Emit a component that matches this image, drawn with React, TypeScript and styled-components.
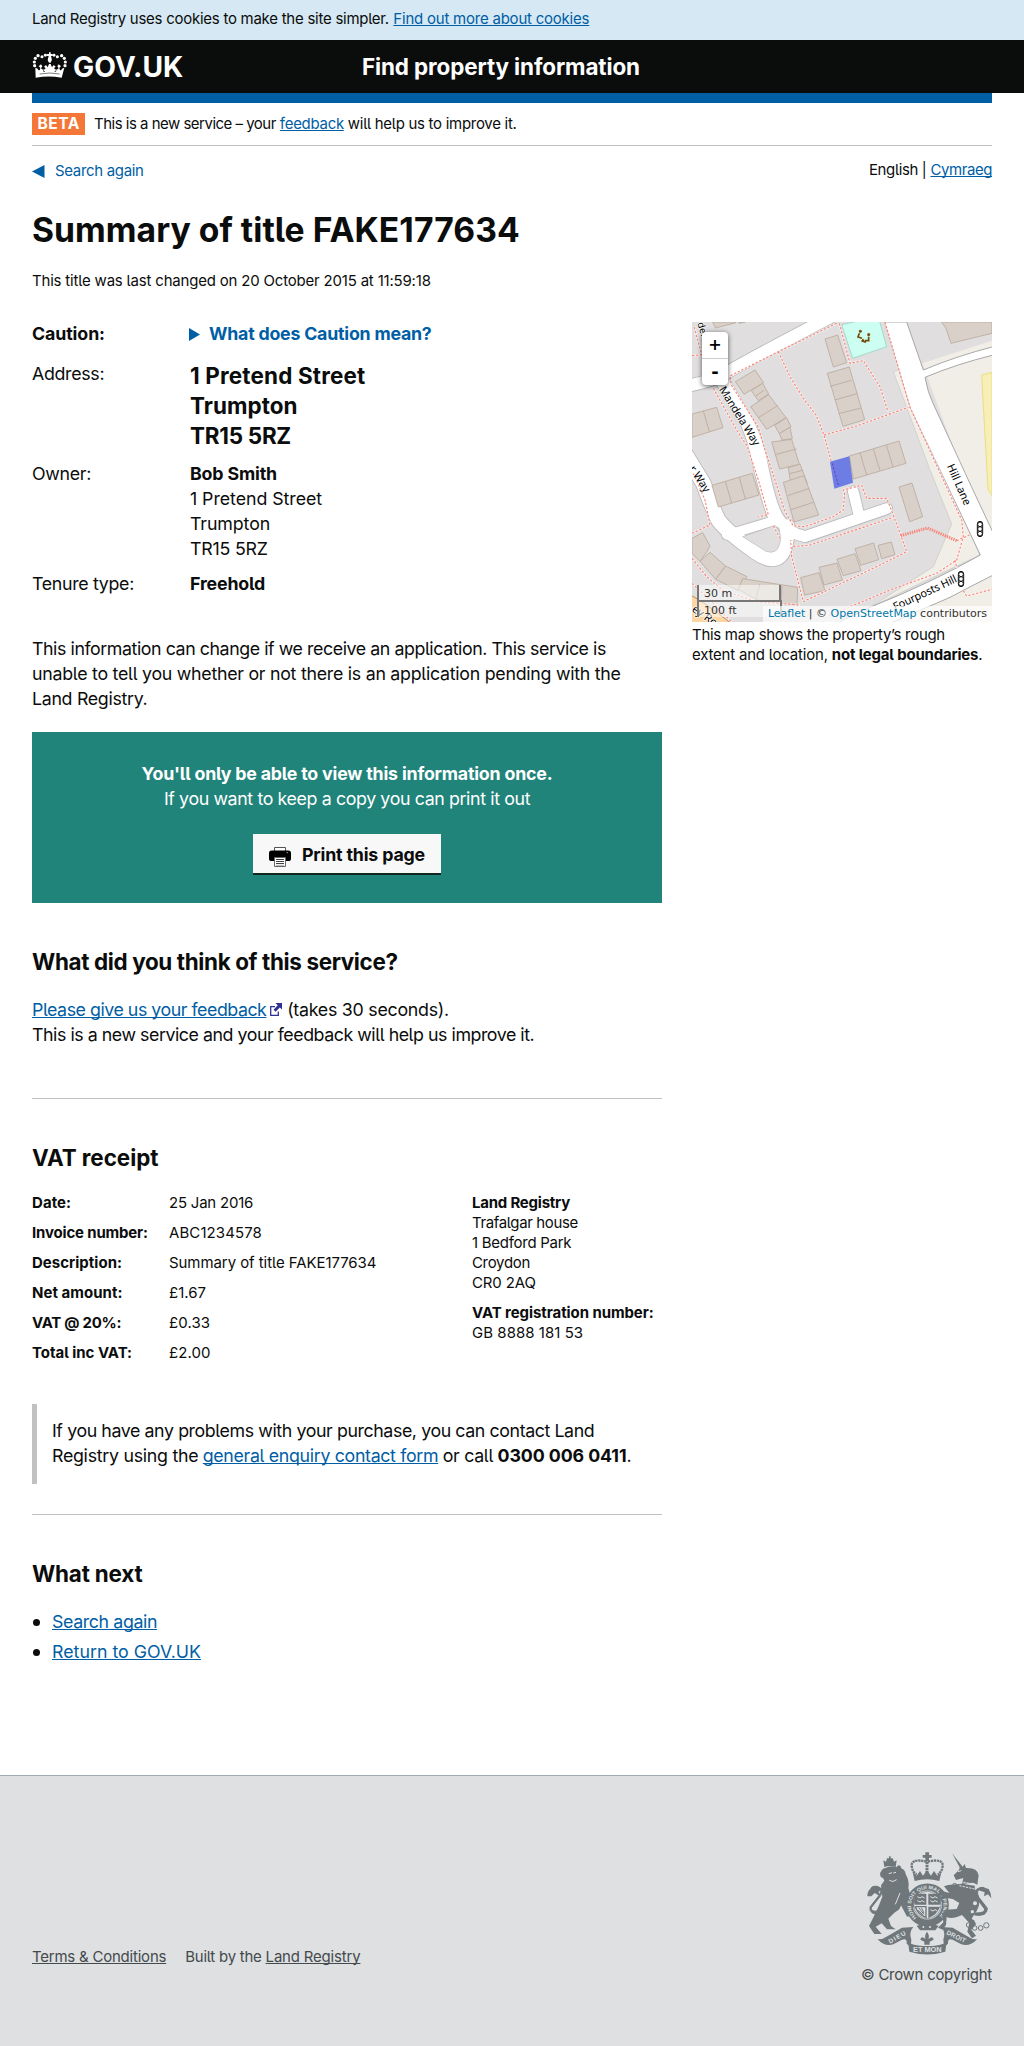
import React from 'react';
import styled, { createGlobalStyle, css } from 'styled-components';

const ink = '#0b0c0c';
const blue = '#005ea5';
const rule = '#bfc1c3';

const Global = createGlobalStyle`
  body {
    margin: 0;
    background: #fff;
    color: ${ink};
    font-family: Inter, "Noto Sans", sans-serif;
    font-feature-settings: "cv05" 1;
    font-size: 14.96px;
    line-height: 20px;
    white-space: nowrap;
  }
`;

/* Type scale */
const T = styled.span<{ $ls?: number }>`
  letter-spacing: ${(p) => p.$ls ?? 0}px;
`;
const B = styled(T)`
  font-weight: 700;
`;
const A = styled.a<{ $ls?: number; $plain?: boolean }>`
  color: ${blue};
  letter-spacing: ${(p) => p.$ls ?? 0}px;
  text-decoration: ${(p) => (p.$plain ? 'none' : 'underline')};
  text-decoration-thickness: 1px;
  text-decoration-skip-ink: none;
  text-underline-offset: 1px;
`;
const body19 = css`
  font-size: 17.77px;
  line-height: 25px;
`;
const Para = styled.p`
  ${body19}
  margin: 0;
`;
const H1 = styled.h1<{ $ls?: number }>`
  font-size: 33.66px;
  line-height: 40px;
  margin: 0;
  letter-spacing: ${(p) => p.$ls ?? 0}px;
`;
const H2 = styled.h2<{ $ls?: number }>`
  font-size: 22.44px;
  line-height: 30px;
  margin: 0;
  letter-spacing: ${(p) => p.$ls ?? 0}px;
`;
const Rule = styled.hr`
  border: 0;
  height: 1px;
  margin: 0;
  background: ${rule};
`;

/* Page chrome */
const Wrap = styled.div`
  width: 960px;
  margin: 0 auto;
`;
const CookieBar = styled.div`
  height: 31px;
  padding-top: 9px;
  background: #d5e8f3;
`;
const Words = styled.div<{ $gap?: number; $drop?: number }>`
  display: flex;
  align-items: baseline;
  gap: ${(p) => p.$gap ?? 4.5}px;
  padding-top: ${(p) => p.$drop ?? 0}px;
`;
const Masthead = styled.header`
  height: 53px;
  background: ${ink};
  color: #fff;
`;
const MastheadRow = styled(Wrap)`
  display: flex;
  height: 53px;
`;
const Logo = styled.a`
  display: flex;
  width: 330px;
  gap: 5px;
  padding-top: 12px;
  box-sizing: border-box;
  font-size: 28.2px;
  line-height: 30px;
  font-weight: 700;
`;
const ServiceName = styled.div`
  padding-top: 12px;
  font-size: 22.44px;
  line-height: 30px;
  font-weight: 700;
  letter-spacing: -0.12px;
`;
const BlueBar = styled.div`
  height: 10px;
  background: ${blue};
`;
const Phase = styled.div`
  display: flex;
  gap: 9px;
  height: 22px;
  padding: 10px 0;
  border-bottom: 1px solid ${rule};
`;
const Tag = styled.strong`
  width: 53px;
  height: 22px;
  padding-left: 5.5px;
  box-sizing: border-box;
  background: #f47738;
  color: #fff;
  font-size: 15.6px;
  line-height: 21px;
  letter-spacing: 0.5px;
`;
const Topline = styled.div`
  display: flex;
  justify-content: space-between;
  height: 50px;
  padding-top: 14px;
`;
const Back = styled.div`
  display: flex;
  align-items: center;
  height: 20px;
  gap: 10px;
  padding-top: 1px;
`;
const Columns = styled.div`
  display: flex;
  justify-content: space-between;
`;
const Main = styled.main`
  width: 630px;
  padding-top: 30px;
  height: 1454px;
`;
const Aside = styled.aside`
  width: 300px;
  padding-top: 31px;
`;
const Caption = styled.p`
  margin: 3px 0 0;
`;

/* Title details */
const Details = styled.dl`
  display: grid;
  grid-template-columns: 158px 1fr;
  row-gap: 10px;
  margin: 0 0 40px;
  ${body19}
  dt, dd { margin: 0; }
`;
const Summary = styled.dd`
  display: flex;
  align-items: flex-start;
  gap: 9px;
  height: 30px;
  color: ${blue};
  svg { margin: 7px 0 0 -1px; }
`;
const BigAddress = styled.dd`
  font-size: 22.44px;
  line-height: 30px;
  font-weight: 700;
`;
const Panel = styled.section`
  display: flex;
  flex-direction: column;
  align-items: center;
  height: 171px;
  margin-top: 21px;
  padding-top: 29px;
  box-sizing: border-box;
  background: #21847b;
  color: #fff;
  ${body19}
`;
const PrintButton = styled.button`
  display: flex;
  width: 188px;
  height: 41px;
  margin-top: 23px;
  padding: 8px 0 0 16px;
  gap: 11px;
  border: 0;
  border-bottom: 2px solid #12281f;
  background: #f8f8f8;
  color: ${ink};
  font: 700 17.77px/25px Inter, sans-serif;
  letter-spacing: -0.17px;
  svg { margin-top: 5px; }
`;
const Block = styled.section<{ $top: number; $bottom?: number }>`
  padding-top: ${(p) => p.$top}px;
  padding-bottom: ${(p) => p.$bottom ?? 0}px;
`;
const Receipt = styled.div`
  display: grid;
  grid-template-columns: 440px 1fr;
  margin-top: 20px;
`;
const ReceiptList = styled.dl`
  display: grid;
  grid-template-columns: 137px 1fr;
  row-gap: 10px;
  margin: 0;
  dt { font-weight: 700; }
  dd { margin: 0; }
`;
const Vendor = styled.div`
  display: flex;
  flex-direction: column;
`;
const VatNumber = styled(Vendor)`
  margin-top: 10px;
`;
const Inset = styled.div`
  margin: 41px 0 30px;
  height: 80px;
  padding: 14px 0 0 15px;
  box-sizing: border-box;
  border-left: 5px solid ${rule};
`;
const List = styled.ul`
  margin: 20px 0 0;
  padding: 0 0 0 20px;
  list-style: none;
  ${body19}
  li { margin-bottom: 5px; position: relative; }
  li::before {
    content: "";
    position: absolute;
    left: -19.5px;
    top: 10px;
    width: 7px;
    height: 7px;
    border-radius: 50%;
    background: ${ink};
  }
`;

/* Footer */
const Footer = styled.footer`
  height: 270px;
  border-top: 1px solid #a1acb2;
  background: #dee0e2;
  color: #454a4c;
  a { color: #454a4c; }
`;
const FooterRow = styled(Wrap)`
  display: flex;
  justify-content: space-between;
  align-items: flex-end;
  height: 213px;
`;
const FooterLinks = styled.div`
  display: flex;
  gap: 19px;
  padding-bottom: 22px;
`;
const Crown = styled.div`
  display: flex;
  flex-direction: column;
  align-items: flex-end;
  gap: 10px;
  padding-bottom: 4px;
`;

/* Map */
const MapBox = styled.div`
  position: relative;
  width: 300px;
  height: 300px;
  overflow: hidden;
  font-family: "DejaVu Sans", sans-serif;
  font-size: 11px;
  svg { display: block; }
`;
const ZoomControl = styled.div`
  position: absolute;
  left: 10px;
  top: 10px;
  width: 26px;
  border-radius: 4px;
  background: #fff;
  box-shadow: 0 1px 5px rgba(0, 0, 0, 0.65);
  color: #000;
  text-align: center;
  font: 700 18px/26px "DejaVu Sans", sans-serif;
`;
const ZoomKey = styled.div<{ $first?: boolean }>`
  height: 26px;
  font-size: ${(p) => (p.$first ? 16 : 18)}px;
  border-bottom: ${(p) => (p.$first ? '1px solid #ccc' : '0')};
`;
const Scale = styled.div`
  position: absolute;
  left: 5px;
  bottom: 5px;
`;
const ScaleLine = styled.div<{ $w: number; $bottom?: boolean }>`
  width: ${(p) => p.$w}px;
  height: 15px;
  padding-left: 5px;
  border: 2px solid #777;
  ${(p) => (p.$bottom ? 'border-bottom: 0; margin-top: -2px;' : 'border-top: 0;')}
  background: rgba(255, 255, 255, 0.5);
  color: #333;
  line-height: 17px;
`;
const Attribution = styled.div`
  position: absolute;
  right: 0;
  bottom: 0;
  height: 16px;
  padding: 0 5px;
  background: rgba(255, 255, 255, 0.7);
  color: #333;
  line-height: 16px;
  a { color: #0078a8; text-decoration: none; }
`;

const CrownMark = () => (
  <svg width="36" height="26" viewBox="36 37 106 78" fill="#fff">
    <path d="M86 38h5v5h6v6h-5l2 8-3 12h-5l-3-12 2-8h-6v-6h7z" />
    <circle cx="88" cy="61" r="6" />
    <circle cx="75" cy="47" r="4.4" /><circle cx="101" cy="47" r="4.4" />
    <circle cx="65" cy="51" r="4.6" /><circle cx="111" cy="51" r="4.6" />
    <circle cx="53" cy="48" r="5" /><circle cx="124" cy="48" r="5" />
    <circle cx="45" cy="56" r="4.8" /><circle cx="132" cy="56" r="4.8" />
    <circle cx="42" cy="67" r="4.8" /><circle cx="135" cy="67" r="4.8" />
    <circle cx="43" cy="78" r="4.8" /><circle cx="134" cy="78" r="4.8" />
    <path d="M45 84l7 3c3 8 7 6 8-3l-5-4 7-6 4 6-4 6c5 6 10 5 14 0l-5-5 6-5 5 7 4-10h5l4 10 5-7 6 5-5 5c4 5 9 6 14 0l-4-6 4-6 7 6-5 4c1 9 5 11 8 3l7-3-8 30q-39-7-78 0z" />
    <path d="M58 103q31-6 60 0" stroke={ink} strokeWidth="1.6" fill="none" />
    <path d="M68 93l5 3M108 93l-5 3" stroke={ink} strokeWidth="3" />
  </svg>
);

const PrinterIcon = () => (
  <svg width="22" height="20" viewBox="0 0 22 20">
    <path d="M5.5 4V.5h11V4" fill="#fff" stroke="#555" />
    <rect x="0" y="3.5" width="22" height="10.5" rx="2.6" fill="#000" />
    <rect x="17.5" y="5" width="1.6" height="1.2" fill="#777" />
    <path d="M5.5 10.5h11v9h-11z" fill="#fff" stroke="#666" />
    <path d="M7 12.5h8M7 14.5h8M7 16.5h8" stroke="#444" />
    <path d="M7 18.3h8" stroke="#aaa" />
  </svg>
);

const OutIcon = styled.svg`
  margin-left: 4px;
`;
const ExternalIcon = () => (
  <OutIcon width="12" height="13" viewBox="0 0 12 13">
    <path d="M5 3.7H.7v8.6h7.6V8.5" fill="none" stroke="#2e3191" strokeWidth="1.3" />
    <path d="M5.5 0H12v6.5L9.8 4.4 5.6 8.8 3.6 6.8 7.7 2.3z" fill="#2e3191" />
  </OutIcon>
);

const buildings = [
  '68,6 76,24 138,8 138,6', '146,6 148,10 166,6',
  '755,6 768,25 783,70 906,40 906,6',
  '405,57 443,45 470,128 430,141',
  '412,160 478,141 524,299 459,319',
  '136,185 195,150 221,188 162,223',
  '184,212 218,190 236,222 205,242',
  '182,260 236,224 288,293 230,328',
  '254,316 290,293 303,320 268,341',
  '268,341 300,322 307,356 276,360',
  '245,366 305,358 328,433 269,447',
  '295,443 330,432 352,490 304,500',
  '6,282 80,262 99,323 6,352',
  '478,408 627,363 648,430 490,477',
  '280,487 342,467 386,585 312,606',
  '66,496 187,460 207,525 85,561',
  '627,501 666,489 698,590 659,605',
  '6,655 38,638 60,678 50,696 30,724 6,700',
  '30,724 60,697 107,738 77,778',
  '77,778 107,738 171,770 145,812',
  '145,808 158,776 323,802 321,855 200,840',
  '332,773 387,758 405,812 344,825',
  '387,742 441,729 457,780 402,795',
  '441,718 495,701 513,752 460,767',
  '495,686 551,669 566,719 512,736',
  '564,676 604,666 615,704 575,716',
];
const walls = [
  'M420 199l64-18M434 240l67-19M446 281l67-17', 'M197 228l26-18', 'M205 293l58-36',
  'M255 404l65-17', 'M299 461l39-10', 'M40 273l18 61', 'M510 398l20 67M550 387l20 65M589 375l20 66',
  'M293 527l65-22M303 569l67-22', 'M106 484l19 65M148 472l18 65', 'M210 791l-13 47M276 798l-3 50',
];
const paths = [
  'M440 10L265 95 120 168 124 195 205 322 225 390 255 480 283 570 310 618 345 620 430 590 460 570 464 520 460 510 515 496 530 535 590 535 606 575 634 650 650 695 570 735 340 845 305 710 302 660',
  'M265 95L300 170 340 235 378 285 402 345 424 425',
  'M402 345L500 318 655 262', 'M448 10L480 130 520 122 570 200 594 275',
  'M585 6L660 262 760 480 815 600 820 650 800 720 740 760 600 810 410 890',
  'M70 205L140 330 172 380 205 480 235 584 205 590',
  'M6 107L35 104 12 20',
  'M6 715L50 770 100 812 200 845 330 855', 'M6 640L60 615 45 540 10 460',
  'M250 618L270 655', 'M310 680L360 675 610 592', 'M800 662L838 645',
  'M795 720L800 745', 'M820 812L830 828 906 808', 'M6 790L60 840 125 906',
];
const roads: [string, number][] = [
  ['M-10 198Q80 180 110 158Q230 90 420 -8', 36],
  ['M98 180L165 295Q195 345 210 400Q240 560 268 600T345 650L590 566', 33],
  ['M95 180L170 305Q195 360 206 420Q235 545 258 600', 40],
  ['M490 515L508 590', 32],
  ['M-15 400L40 490Q65 560 85 600Q110 635 195 695T290 650L292 620', 44],
  ['M110 645L270 597', 28],
];

const Lights = ({ x, y }: { x: number; y: number }) => (
  <g transform={`translate(${x} ${y})`} fill="#fff" stroke="#111" strokeWidth="3">
    <rect x="-8" y="-23" width="16" height="46" rx="8" />
    <circle cy="-14" r="7" /><circle r="7" /><circle cy="14" r="7" />
  </g>
);

const MapDrawing = () => (
  <svg width="300" height="300" viewBox="6 6 900 900">
    <rect x="6" y="6" width="900" height="900" fill="#e0dedf" />
    <path d="M610 155l16-6L760 450 870 705 540 862 730 740 785 612 720 450z" fill="#f1eee8" stroke="#c9c7c4" strokeWidth="2" />
    <path d="M697 130L906 62v844H560L906 700z" fill="#f1eee8" />
    <path d="M875 165l31-8v370l-12-20z" fill="#f7efb7" stroke="#eadf7c" strokeWidth="3" />
    {['#b9b8b8', '#fff'].map((c, i) => (
      <g key={c} fill="none" stroke={c} strokeLinecap="round" strokeLinejoin="round">
        {roads.map(([d, w]) => <path key={d} d={d} strokeWidth={w + (i ? 0 : 5)} />)}
      </g>
    ))}
    <path d="M158 650L255 616Q278 640 270 668Q262 706 228 694z" fill="#e0dedf" stroke="#bbb" strokeWidth="2" />
    <path d="M583 6h67l50 144Q800 108 910 80v25Q800 132 705 172q8 45 25 80L835 480l75 160v125Q840 800 780 832L600 910H440l100-48Q720 790 871 705L750 450 660 262z" fill="#fff" stroke="#999" strokeWidth="2.5" />
    <g fill="#d9d0c9" stroke="#b9a99c" strokeWidth="2.5">
      {buildings.map((p) => <polygon key={p} points={p} />)}
      {walls.map((d) => <path key={d} d={d} />)}
    </g>
    <path d="M455 14L565 -10 590 80 488 115z" fill="#ccfff1" stroke="#8fcdb8" strokeWidth="2" />
    <g fill="#734a08" stroke="#734a08">
      <circle cx="511" cy="34" r="4" /><circle cx="536" cy="44" r="4" />
      <path d="M508 40l-4 11 12 4M536 50v12l-12 0M514 62l14 5M518 57l3 9" fill="none" strokeWidth="5" />
    </g>
    <path d="M-4 822Q50 850 125 912H-4z" fill="#fdd6a4" stroke="#b98f5a" strokeWidth="3" />
    <g fill="none" strokeLinejoin="round">
      {paths.map((d) => <path key={d} d={d} stroke="#fff" strokeOpacity=".55" strokeWidth="7" />)}
      {paths.map((d) => <path key={d} d={d} stroke="#fa8478" strokeWidth="3.4" strokeDasharray="7 5" />)}
      <path d="M632 647L712 624 800 662" stroke="#fa8478" strokeWidth="9" strokeDasharray="4 3" />
    </g>
    <path d="M420 425l58-16 11 79-56 18z" fill="#5468e4" fillOpacity=".82" />
    <path d="M427 430l18 65" stroke="#6a3bc4" strokeWidth="3" strokeDasharray="7 5" />
    <Lights x={870} y={627} />
    <Lights x={813} y={777} />
    <g fontFamily="'Noto Sans', sans-serif" fontSize="33" fill="#000" stroke="#fff" strokeWidth="4" paintOrder="stroke">
      <text transform="translate(86 208) rotate(58)" textLength="202">Mandela Way</text>
      <text transform="translate(770 438) rotate(66)" textLength="132">Hill Lane</text>
      <text transform="translate(616 872) rotate(-25)" textLength="206">Fourposts Hill</text>
      <text transform="translate(-4 446) rotate(57)">r Way</text>
      <text transform="translate(22 10) rotate(73)" fontSize="29">de.</text>
      <text transform="translate(4 872) rotate(35)">ey Road</text>
    </g>
  </svg>
);

const Crest = () => (
  <svg width="126" height="104" viewBox="80 60 378 312" fill="#6f777b">
    {/* lion */}
    <path d="M135 108l-3-20 8 4 3-10h6v-6h5v6h6l4 10 8-4-3 20q-17-6-34 0z" />
    <path d="M137 112q18-10 34-3 10-14 16 4 10 2 12 16 12 22 8 42l8 28 22 24-8 10-16-10 6 30-16 4-18-34q-2 14-20 22l-18 18 8 22 14 10h-26l-16-18-18 10 18 22h-22l-16-24 14-28 16-34 10-26-4-34 10-14-4-8-6-2q-8-14 8-27z" />
    <path d="M126 250q-38 2-34-22l28-36q12-22-8-26l-16 12q-4-14 16-12 24 6 12 28l-28 36q-4 14 28 10z" stroke="#6f777b" strokeWidth="3" />
    <path d="M84 196q0-24 24-30l22 6-12 10 2 12-14-8-10 10z" />
    {/* crown */}
    <path d="M258 64h11v8h8v8h-8v10h-11V80h-8v-8h8z" />
    <path d="M262 92q-52-12-44 18 2 14 14 20M265 92q52-12 44 18-2 14-14 20" fill="none" stroke="#6f777b" strokeWidth="7" strokeDasharray="7 2" />
    <path d="M263 92v38" stroke="#6f777b" strokeWidth="9" strokeDasharray="7 2" />
    <path d="M226 150l-6-26 12 10 10-14 9 14 12-16 12 16 9-14 10 14 12-10-6 26q-37-10-74 0z" />
    {/* garter and shield */}
    <circle cx="264" cy="222" r="54" fill="none" stroke="#6f777b" strokeWidth="21" />
    <circle cx="264" cy="222" r="41" fill="#dee0e2" stroke="#6f777b" strokeWidth="2" />
    <path d="M228 188h33v33h-35q-4-18 2-33zM267 188h34q6 16 2 33h-36zM267 227h35q-8 24-35 34z" />
    <path d="M228 227h32v32q-24-8-32-32z" fill="none" stroke="#6f777b" strokeWidth="4" />
    <path d="M238 230l16 20M236 238l16 14M246 230l8 16" stroke="#6f777b" strokeWidth="3" />
    <path d="M234 197l8 4 6-4 8 4M234 209l8 4 6-4 8 4M273 197l8 4 6-4 8 4M273 209l8 4 6-4 8 4M273 236l8 4 6-4 6 3" fill="none" stroke="#dee0e2" strokeWidth="3" />
    <path id="garter" d="M232 260A49 49 0 1 1 296 260" fill="none" />
    <text fontFamily="'Liberation Sans', sans-serif" fontWeight="700" fontSize="15" fill="#dee0e2">
      <textPath href="#garter" textLength="232" lengthAdjust="spacingAndGlyphs">HONI SOIT QUI MAL Y PENSE</textPath>
    </text>
    <path d="M232 284l32-8 34 8-10 14h-46z" />
    <circle cx="252" cy="288" r="3" fill="#dee0e2" /><circle cx="272" cy="288" r="3" fill="#dee0e2" />
    {/* unicorn */}
    <path d="M338 67l32 40 6-8 4 12q34-2 38 22l-4 28 -14-6-32 4 4-18-22 6-7-14 16-16 2-8z" />
    <path d="M368 158l38 6 2 14q22 34 4 62l-12 18 10 22-14 16 14 18-12 8-14-20 6-26-22-24q-30 14-46 6l-2 24-10 14-14-6 16-16-4-26 12-12 32-2 8-18-20-12-24-4-18-12 10-8 22 6-16-20 12-4z" />
    <path d="M406 252q38 6 38-20l-26-34q-10-20 8-26l14 8q-2-14-18-10-22 6-12 30l26 34q2 12-28 12z" stroke="#6f777b" strokeWidth="3" />
    <path d="M414 176l14-8 20 6q8 12 8 28l-10-12-12 6 2-12z" />
    <g fill="none" stroke="#6f777b" strokeWidth="3">
      <circle cx="346" cy="163" r="6" /><circle cx="330" cy="170" r="6" /><circle cx="388" cy="282" r="7" />
      <circle cx="406" cy="291" r="7" /><circle cx="424" cy="291" r="7" /><circle cx="441" cy="283" r="8" />
    </g>
    <g fill="#dee0e2"><circle cx="407" cy="217" r="6" /><circle cx="399" cy="242" r="5" /><circle cx="403" cy="262" r="5" /></g>
    <path d="M362 152l48 8M360 164l46 10" stroke="#dee0e2" strokeWidth="3" strokeDasharray="7 3" />
    <path d="M148 128l10-3M162 126l8-2M150 148q10 8 22-2M182 186l-14 34M356 122l10-3M190 255l10 20" fill="none" stroke="#dee0e2" strokeWidth="3" />
    {/* ribbon */}
    <path d="M114 324q12 4 30-8l44-26 34-2q-14 16-6 38l-2 22-12-10q2-18-14-12l-26 14q-26 8-48-16z" />
    <path d="M414 324q-12 4-30-8l-44-26-34-2q14 16 6 38l2 22 12-10q-2-18 14-12l26 14q26 8 48-16z" />
    <path d="M206 330q8 15 58 15t58-15l-4 32q-54 17-108 0z" />
    <path d="M263 302q9 12 4 22 14-12 16 2l-12 6v9h-16v-9l-12-6q2-14 16-2-5-10 4-22z" />
    <g fontFamily="'Liberation Sans', sans-serif" fontWeight="700" fontSize="19" fill="#dee0e2">
      <text x="221" y="363" textLength="86" lengthAdjust="spacingAndGlyphs">ET MON</text>
      <text transform="translate(152 338) rotate(-29)" textLength="56">DIEU</text>
      <text transform="translate(320 309) rotate(26)" textLength="62">DROIT</text>
    </g>
  </svg>
);

const receipt: [string, number, string, number][] = [
  ['Date:', 0.1, '25 Jan 2016', -0.2],
  ['Invoice number:', -0.15, 'ABC1234578', 0.12],
  ['Description:', 0.04, 'Summary of title FAKE177634', -0.04],
  ['Net amount:', 0.05, '£1.67', 0],
  ['VAT @ 20%:', -0.25, '£0.33', 0.1],
  ['Total inc VAT:', -0.02, '£2.00', 0.1],
];

export default function App() {
  return (
    <>
      <Global />
      <CookieBar>
        <Wrap>
          <Words>
            <T $ls={-0.24}>Land Registry uses cookies to make the site simpler.</T>
            <A $ls={-0.2}>Find out more about cookies</A>
          </Words>
        </Wrap>
      </CookieBar>
      <Masthead>
        <MastheadRow>
          <Logo><CrownMark />GOV.UK</Logo>
          <ServiceName>Find property information</ServiceName>
        </MastheadRow>
      </Masthead>
      <Wrap>
        <BlueBar />
        <Phase>
          <Tag>BETA</Tag>
          <Words $gap={4} $drop={1}>
            <T $ls={-0.486}>This is a new service – your</T>
            <A $ls={-0.27}>feedback</A>
            <T $ls={-0.27}>will help us to improve it.</T>
          </Words>
        </Phase>
        <Topline>
          <Back>
            <svg width="13" height="13" viewBox="0 0 13 13"><path d="M0 6.5L12.5 0v13z" fill={blue} /></svg>
            <A $plain $ls={-0.3}>Search again</A>
          </Back>
          <Words $gap={4}>
            <T $ls={-0.35}>English |</T>
            <A $ls={-0.4}>Cymraeg</A>
          </Words>
        </Topline>
        <H1 $ls={0.04}>Summary of title FAKE177634</H1>
        <Block $top={21}>
          <T $ls={-0.17}>This title was last changed on 20 October 2015 at 11:59:18</T>
        </Block>
        <Columns>
          <Main>
            <Details>
              <dt><B $ls={-0.1}>Caution:</B></dt>
              <Summary>
                <svg width="11" height="13" viewBox="0 0 11 13"><path d="M0 0l11 6.5L0 13z" fill={blue} /></svg>
                <B $ls={-0.22}>What does Caution mean?</B>
              </Summary>
              <dt><T $ls={-0.3}>Address:</T></dt>
              <BigAddress>
                <T $ls={0.17}>1 Pretend Street</T><br />
                <T $ls={0.04}>Trumpton</T><br />
                <T $ls={-0.25}>TR15 5RZ</T>
              </BigAddress>
              <dt><T $ls={-0.3}>Owner:</T></dt>
              <dd>
                <B $ls={-0.15}>Bob Smith</B><br />
                <T $ls={-0.05}>1 Pretend Street</T><br />
                <T $ls={-0.1}>Trumpton</T><br />
                <T $ls={-0.2}>TR15 5RZ</T>
              </dd>
              <dt><T $ls={-0.31}>Tenure type:</T></dt>
              <dd><B $ls={-0.15}>Freehold</B></dd>
            </Details>
            <Para>
              <T $ls={-0.425}>This information can change if we receive an application. This service is</T><br />
              <T $ls={-0.26}>unable to tell you whether or not there is an application pending with the</T><br />
              <T $ls={-0.3}>Land Registry.</T>
            </Para>
            <Panel>
              <B $ls={-0.19}>You'll only be able to view this information once.</B>
              <T $ls={-0.37}>If you want to keep a copy you can print it out</T>
              <PrintButton><PrinterIcon />Print this page</PrintButton>
            </Panel>
            <Block $top={44} $bottom={51}>
              <H2 $ls={-0.37}>What did you think of this service?</H2>
              <Block $top={20}>
                <Para>
                  <A $ls={-0.463}>Please give us your feedback<ExternalIcon /></A>
                  <T $ls={-0.25}> (takes 30 seconds).</T><br />
                  <T $ls={-0.45}>This is a new service and your feedback will help us improve it.</T>
                </Para>
              </Block>
            </Block>
            <Rule />
            <Block $top={44}>
              <H2 $ls={-0.05}>VAT receipt</H2>
              <Receipt>
                <ReceiptList>
                  {receipt.map(([label, a, value, b]) => (
                    <React.Fragment key={label}>
                      <dt><T $ls={a}>{label}</T></dt>
                      <dd><T $ls={b}>{value}</T></dd>
                    </React.Fragment>
                  ))}
                </ReceiptList>
                <div>
                  <Vendor>
                    <B $ls={-0.2}>Land Registry</B>
                    <T $ls={-0.35}>Trafalgar house</T>
                    <T $ls={-0.25}>1 Bedford Park</T>
                    <T $ls={-0.3}>Croydon</T>
                    <T $ls={-0.1}>CR0 2AQ</T>
                  </Vendor>
                  <VatNumber>
                    <B $ls={-0.06}>VAT registration number:</B>
                    <T $ls={0.06}>GB 8888 181 53</T>
                  </VatNumber>
                </div>
              </Receipt>
            </Block>
            <Inset>
              <Para>
                <T $ls={-0.4}>If you have any problems with your purchase, you can contact Land</T>
                <Words>
                  <T $ls={-0.27}>Registry using the</T>
                  <A $ls={-0.324}>general enquiry contact form</A>
                  <T $ls={-0.3}>or call</T>
                  <span><B $ls={-0.075}>0300 006 0411</B>.</span>
                </Words>
              </Para>
            </Inset>
            <Rule />
            <Block $top={44}>
              <H2 $ls={-0.2}>What next</H2>
              <List>
                <li><A $ls={-0.38}>Search again</A></li>
                <li><A $ls={0.02}>Return to GOV.UK</A></li>
              </List>
            </Block>
          </Main>
          <Aside>
            <MapBox>
              <MapDrawing />
              <ZoomControl><ZoomKey $first>+</ZoomKey><ZoomKey>-</ZoomKey></ZoomControl>
              <Scale>
                <ScaleLine $w={75}>30 m</ScaleLine>
                <ScaleLine $w={76} $bottom>100 ft</ScaleLine>
              </Scale>
              <Attribution><a>Leaflet</a> | © <a>OpenStreetMap</a> contributors</Attribution>
            </MapBox>
            <Caption>
              <T $ls={-0.27}>This map shows the property’s rough</T><br />
              <T $ls={-0.18}>extent and location, </T><B $ls={-0.17}>not legal boundaries</B>.
            </Caption>
          </Aside>
        </Columns>
      </Wrap>
      <Footer>
        <FooterRow>
          <FooterLinks>
            <A $ls={-0.2}>Terms &amp; Conditions</A>
            <Words $gap={4}>
              <T $ls={-0.22}>Built by the</T>
              <A $ls={-0.17}>Land Registry</A>
            </Words>
          </FooterLinks>
          <Crown>
            <Crest />
            <T $ls={-0.255}>© Crown copyright</T>
          </Crown>
        </FooterRow>
      </Footer>
    </>
  );
}
